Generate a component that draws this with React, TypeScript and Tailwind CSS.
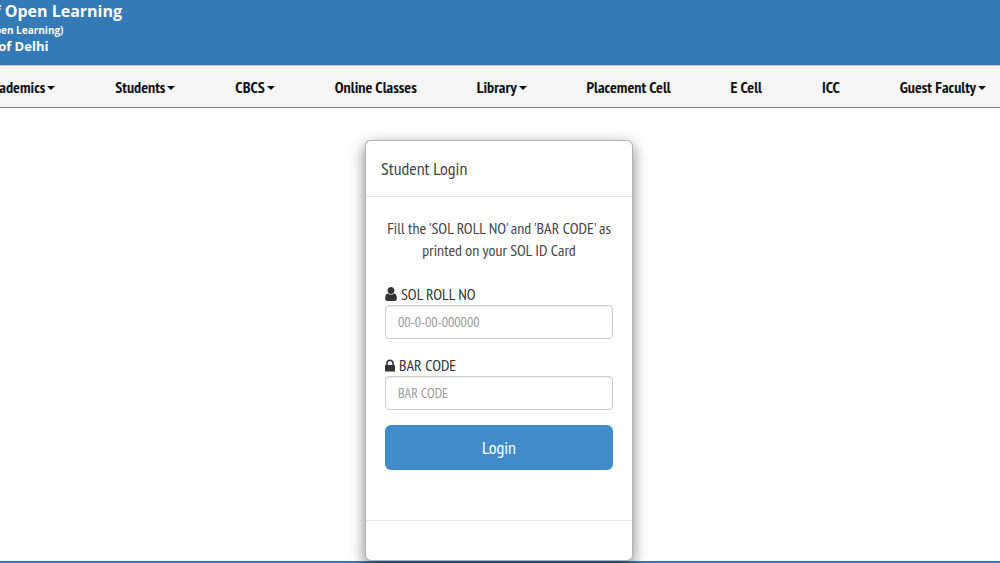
import React from 'react';

const menuItems = [
  { label: 'Academics', dropdown: true },
  { label: 'Students', dropdown: true },
  { label: 'CBCS', dropdown: true },
  { label: 'Online Classes', dropdown: false },
  { label: 'Library', dropdown: true },
  { label: 'Placement Cell', dropdown: false },
  { label: 'E Cell', dropdown: false },
  { label: 'ICC', dropdown: false },
  { label: 'Guest Faculty', dropdown: true },
];

function UserIcon() {
  return (
    <svg viewBox="0 -1408 1280 1536" className="h-[14px] w-3 fill-current" aria-hidden="true">
      <path
        transform="scale(1 -1)"
        d="M1280 137q0-109-62.5-187t-150.5-78h-854q-88 0-150.5 78t-62.5 187q0 85 8.5 160.5t31.5 152 58.5 131 94 89 134.5 34.5q131-128 313-128t313 128q76 0 134.5-34.5t94-89 58.5-131 31.5-152 8.5-160.5zM1024 1024q0-159-112.5-271.5t-271.5-112.5-271.5 112.5-112.5 271.5 112.5 271.5 271.5 112.5 271.5-112.5 112.5-271.5z"
      />
    </svg>
  );
}

function LockIcon() {
  return (
    <svg viewBox="0 -1408 1152 1408" className="h-[13px] w-[10px] fill-current" aria-hidden="true">
      <path
        transform="scale(1 -1)"
        d="M320 768h512v192q0 106-75 181t-181 75-181-75-75-181v-192zM1152 672v-576q0-40-28-68t-68-28h-960q-40 0-68 28t-28 68v576q0 40 28 68t68 28h32v192q0 184 132 316t316 132 316-132 132-316v-192h32q40 0 68-28t28-68z"
      />
    </svg>
  );
}

function Header() {
  return (
    <header className="h-[65px] overflow-hidden bg-[#337ab7] font-['Open_Sans',sans-serif] font-bold text-white">
      <div className="-ml-[72px] whitespace-nowrap">
        <h1 className="text-[16px] leading-[23px]">School of Open Learning</h1>
        <p className="text-[10px] leading-[14px]">(Campus of Open Learning)</p>
        <p className="text-[13px] leading-[18px]">University of Delhi</p>
      </div>
    </header>
  );
}

function Navbar() {
  return (
    <nav className="overflow-hidden border-t border-b border-t-[#c9c4ac] border-b-[#808080] bg-[#f6f6f6]">
      <ul className="-ml-[14px] mr-[14px] flex h-[41px] items-center justify-between">
        {menuItems.map((item) => (
          <li key={item.label}>
            <a href="#" className="flex items-center gap-[2px] whitespace-nowrap text-[16px] font-bold text-[#111111]">
              {item.label}
              {item.dropdown && (
                <svg viewBox="0 0 8 4" className="mt-[2px] h-1 w-2 fill-current" aria-hidden="true">
                  <path d="M0 0h8L4 4z" />
                </svg>
              )}
            </a>
          </li>
        ))}
      </ul>
    </nav>
  );
}

function Field({ id, label, icon, placeholder }: { id: string, label: string, icon: React.ReactNode, placeholder: string }) {
  return (
    <div className="mb-[15px]">
      <label htmlFor={id} className="flex h-[22px] items-center gap-1 text-[16px] text-[#333333]">
        {icon}
        {label}
      </label>
      <input
        id={id}
        type="text"
        placeholder={placeholder}
        className="block h-[34px] w-full rounded-[4px] border border-[#cccccc] px-3 text-[14px] text-[#555555] shadow-[inset_0_1px_1px_rgba(0,0,0,0.075)] outline-none placeholder:text-[#999999]"
      />
    </div>
  );
}

function LoginCard() {
  return (
    <section className="w-[268px] rounded-[6px] border border-black/30 bg-white shadow-[0_5px_15px_rgba(0,0,0,0.5)]">
      <h2 className="border-b border-[#e5e5e5] px-[15px] py-[15px] text-[18px] leading-[25px] text-[#444444]">Student Login</h2>
      <form className="px-[19px] pt-5 pb-[50px]">
        <p className="mb-[22px] text-center text-[16px] leading-[22px] text-[#444444]">
          Fill the 'SOL ROLL NO' and 'BAR CODE' as printed on your SOL ID Card
        </p>
        <Field id="roll-no" label="SOL ROLL NO" icon={<UserIcon />} placeholder="00-0-00-000000" />
        <Field id="bar-code" label="BAR CODE" icon={<LockIcon />} placeholder="BAR CODE" />
        <button type="button" className="h-[45px] w-full rounded-[6px] bg-[#428bca] text-[18px] text-white">
          Login
        </button>
      </form>
      <div className="h-10 border-t border-[#e5e5e5]"></div>
    </section>
  );
}

export default function App() {
  return (
    <div className="overflow-hidden bg-white font-['PT_Sans_Narrow','Liberation_Sans_Narrow',sans-serif]">
      <Header />
      <Navbar />
      <main className="flex justify-center pt-8 pr-0.5">
        <LoginCard />
      </main>
      <footer className="h-[2px] bg-[#337ab7]"></footer>
    </div>
  );
}
